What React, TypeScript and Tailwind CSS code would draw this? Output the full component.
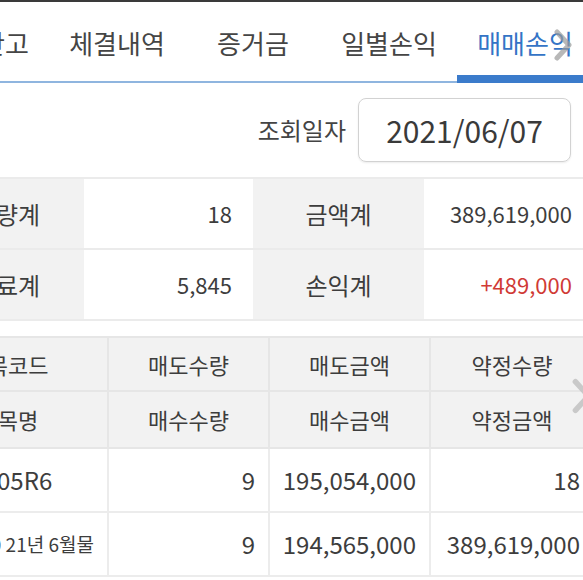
import React from 'react';

const tabs = ['계좌잔고', '체결내역', '증거금', '일별손익', '매매손익'];

const summary = [
    { l1: '체결량계', v1: '18', l2: '금액계', v2: '389,619,000', red: false },
    { l1: '수수료계', v1: '5,845', l2: '손익계', v2: '+489,000', red: true },
];

const headRows = [
    ['종목코드', '매도수량', '매도금액', '약정수량'],
    ['종목명', '매수수량', '매수금액', '약정금액'],
];

const dataRows = [
    ['KR410105R6', '9', '195,054,000', '18'],
    ['코스피 200 21년 6월물', '9', '194,565,000', '389,619,000'],
];

function Chevron({ className }: { className: string }) {
    return (
        <svg className={className} viewBox="0 0 20 32" fill="none">
            <path d="M4 3 L16 16 L4 29" stroke="currentColor" strokeWidth="5" strokeLinecap="round" strokeLinejoin="round" />
        </svg>
    );
}

export default function App() {
    return (
        <div className="relative h-[580px] w-[583px] overflow-hidden bg-white font-['Noto_Sans_CJK_KR',sans-serif] text-[#3d3d3d]">
            <div className="h-[2px] bg-[#3a3a3a]" />

            {/* tabs, scrolled to the right */}
            <div className="relative h-[81px] border-b-2 border-[#8fb5df]">
                <div className="ml-[-87px] flex h-full">
                    {tabs.map((t, i) => {
                        const active = i === tabs.length - 1;
                        return (
                            <div key={t} className="relative flex h-full w-[136px] shrink-0 items-center justify-center pt-[2px]">
                                <span className={active ? 'text-[26px] text-[#3474c6]' : 'text-[26px] text-[#454545]'}>{t}</span>
                                {active && <div className="absolute inset-x-0 bottom-[-2px] h-[8px] bg-[#3b7bcb]" />}
                            </div>
                        );
                    })}
                </div>
                <Chevron className="absolute left-[553px] top-[27px] h-[32px] w-[20px] text-[#9a9a9a]/70" />
            </div>

            {/* date */}
            <div className="flex items-center justify-end gap-3 py-[15px] pr-[12px]">
                <span className="text-[24px] text-[#444]">조회일자</span>
                <div className="flex h-[64px] w-[213px] items-center justify-center rounded-lg border border-[#d2d2d2] shadow-[0_1px_2px_rgba(0,0,0,0.08)]">
                    <span className="text-[30px] text-[#3a3a3a]">2021/06/07</span>
                </div>
            </div>

            {/* summary */}
            <div className="border-t-2 border-[#ebebeb]">
                {summary.map((r) => (
                    <div key={r.l1} className="ml-[-92px] grid h-[71px] grid-cols-[176px_169px_171px_171px] border-b-2 border-[#ebebeb] text-[22px]">
                        <div className="flex items-center justify-center bg-[#f2f2f2] text-[24px]">{r.l1}</div>
                        <div className="flex items-center justify-end pr-[21px]">{r.v1}</div>
                        <div className="flex items-center justify-center bg-[#f2f2f2] text-[24px]">{r.l2}</div>
                        <div className={`flex items-center justify-end pr-[23px] ${r.red ? 'text-[#d03a35]' : ''}`}>{r.v2}</div>
                    </div>
                ))}
            </div>

            {/* list */}
            <div className="relative mt-[15px] border-t-2 border-[#e6e6e6]">
                {headRows.map((r, ri) => (
                    <div
                        key={ri}
                        className={`ml-[-91px] grid grid-cols-[198px_161px_161px_164px] border-b-2 border-[#e6e6e6] bg-[#f2f2f2] text-[22px] ${ri === 0 ? 'h-[54px]' : 'h-[57px]'}`}
                    >
                        {r.map((c, ci) => (
                            <div key={ci} className={`flex items-center justify-center ${ci > 0 ? 'border-l-2 border-[#e6e6e6]' : ''}`}>
                                {c}
                            </div>
                        ))}
                    </div>
                ))}
                {dataRows.map((r, ri) => (
                    <div key={ri} className="ml-[-91px] grid h-[64px] grid-cols-[198px_161px_161px_164px] border-b-2 border-[#ececec]">
                        {r.map((c, ci) => (
                            <div
                                key={ci}
                                className={`flex items-center whitespace-nowrap ${
                                    ci === 0
                                        ? `justify-start pl-[4px] ${ri === 1 ? 'text-[19px]' : 'text-[24px]'}`
                                        : 'justify-end border-l-2 border-[#ececec] pr-[13px] text-[24px]'
                                }`}
                            >
                                {c}
                            </div>
                        ))}
                    </div>
                ))}
                <Chevron className="absolute left-[571px] top-[40px] h-[36px] w-[22px] text-[#c4c4c4]/90" />
            </div>
        </div>
    );
}
